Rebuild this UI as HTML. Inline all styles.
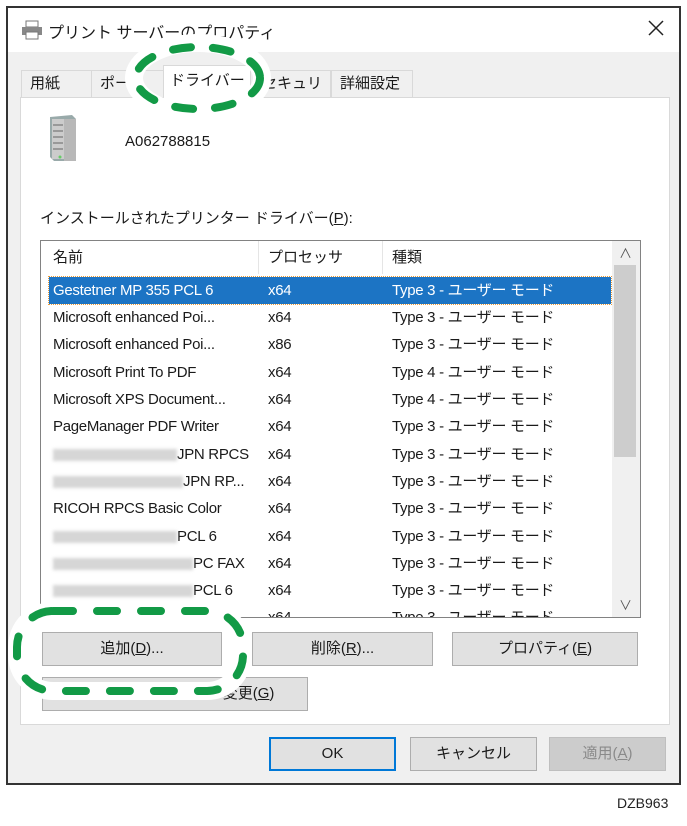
<!DOCTYPE html>
<html><head><meta charset="utf-8"><style>
*{margin:0;padding:0;box-sizing:border-box}
body{width:687px;height:826px;background:#fff;position:relative;overflow:hidden;font-family:"Liberation Sans","Noto Sans CJK JP",sans-serif;color:#1a1a1a}
.a{position:absolute}
.dlg{left:6px;top:6px;width:675px;height:779px;border:2px solid #333;background:#f0f0f0}
.title{left:0;top:0;width:671px;height:44px;background:#fff}
.tab{top:62px;height:28px;border:1px solid #d9d9d9;border-bottom:none;background:#f0f0f0;font-size:15px;line-height:26px;padding-left:8px}
.panel{left:12px;top:89px;width:650px;height:628px;background:#fff;border:1px solid #d9d9d9}
.list{left:40px;top:240px;width:601px;height:378px;border:1px solid #828282;background:#fff;overflow:hidden}
.row{position:absolute;left:8px;width:562px;height:27px;font-size:15px;line-height:27px;letter-spacing:-0.3px}
.row span{position:absolute;white-space:nowrap}
.btn{position:absolute;height:34px;border:1px solid #adadad;background:#e1e1e1;font-size:15px;text-align:center;line-height:32px}
.blur{display:inline-block;height:12px;background:#d6d6d6;filter:blur(1.5px);vertical-align:middle}
</style></head><body>
<div class="a dlg">
 <div class="a title">
  <svg class="a" style="left:13px;top:12px" width="22" height="20" viewBox="0 0 22 20"><rect x="5" y="1" width="12" height="6" fill="#fff" stroke="#777"/><rect x="1" y="7" width="20" height="8" fill="#888"/><rect x="5" y="12" width="12" height="7" fill="#fff" stroke="#777"/></svg>
  <div class="a" style="left:40px;top:11px;font-size:16px">プリント サーバーのプロパティ</div>
  <svg class="a" style="left:640px;top:12px" width="16" height="16"><path d="M1 1L15 15M15 1L1 15" stroke="#222" stroke-width="1.5"/></svg>
 </div>
 <div class="a tab" style="left:13px;width:72px">用紙</div>
 <div class="a tab" style="left:83px;width:76px">ポート</div>
 <div class="a tab" style="left:245px;width:78px">セキュリティ</div>
 <div class="a tab" style="left:323px;width:82px">詳細設定</div>
 <div class="a panel"></div>
 <div class="a tab" style="left:155px;top:57px;width:88px;height:34px;background:#fff;padding-left:6px;line-height:30px">ドライバー</div>
</div>
<svg class="a" style="left:46px;top:113px" width="34" height="50" viewBox="0 0 34 50"><polygon points="4,4 26,2 30,6 30,48 8,48 4,44" fill="#9aa"/><rect x="6" y="6" width="12" height="40" fill="#ccc"/><g stroke="#666"><line x1="7" y1="12" x2="17" y2="12"/><line x1="7" y1="18" x2="17" y2="18"/><line x1="7" y1="24" x2="17" y2="24"/><line x1="7" y1="30" x2="17" y2="30"/><line x1="7" y1="36" x2="17" y2="36"/></g><rect x="18" y="6" width="12" height="42" fill="#b8b8b8"/><circle cx="14" cy="44" r="1.5" fill="#6c6"/></svg>
<div class="a" style="left:125px;top:133px;font-size:15px">A062788815</div>
<div class="a" style="left:40px;top:207px;font-size:15px">インストールされたプリンター ドライバー(<u>P</u>):</div>
<div class="a list">
 <div class="a" style="left:0;top:0;width:571px;height:33px;font-size:15px;line-height:33px">
  <span class="a" style="left:12px">名前</span><span class="a" style="left:227px">プロセッサ</span><span class="a" style="left:351px">種類</span>
  <div class="a" style="left:217px;top:0;width:1px;height:33px;background:#e5e5e5"></div>
  <div class="a" style="left:341px;top:0;width:1px;height:33px;background:#e5e5e5"></div>
 </div>
 <div class="a" style="left:571px;top:0;width:28px;height:376px;background:#f0f0f0"></div>
 <div class="a" style="left:573px;top:24px;width:22px;height:192px;background:#cdcdcd"></div>
 <div class="a" style="left:578px;top:2px;font-size:13px;color:#555">∧</div>
 <div class="a" style="left:578px;top:354px;font-size:13px;color:#555">∨</div>
 <div class="row" style="top:36px;background:#1c74c4;color:#fff;outline:1px dotted #e89b3a"><span style="left:4px">Gestetner MP 355 PCL 6</span><span style="left:219px">x64</span><span style="left:343px">Type 3 - ユーザー モード</span></div>
 <div class="row" style="top:63px"><span style="left:4px">Microsoft enhanced Poi...</span><span style="left:219px">x64</span><span style="left:343px">Type 3 - ユーザー モード</span></div>
 <div class="row" style="top:90px"><span style="left:4px">Microsoft enhanced Poi...</span><span style="left:219px">x86</span><span style="left:343px">Type 3 - ユーザー モード</span></div>
 <div class="row" style="top:118px"><span style="left:4px">Microsoft Print To PDF</span><span style="left:219px">x64</span><span style="left:343px">Type 4 - ユーザー モード</span></div>
 <div class="row" style="top:145px"><span style="left:4px">Microsoft XPS Document...</span><span style="left:219px">x64</span><span style="left:343px">Type 4 - ユーザー モード</span></div>
 <div class="row" style="top:172px"><span style="left:4px">PageManager PDF Writer</span><span style="left:219px">x64</span><span style="left:343px">Type 3 - ユーザー モード</span></div>
 <div class="row" style="top:200px"><span style="left:4px"><i class="blur" style="width:124px"></i>JPN RPCS</span><span style="left:219px">x64</span><span style="left:343px">Type 3 - ユーザー モード</span></div>
 <div class="row" style="top:227px"><span style="left:4px"><i class="blur" style="width:130px"></i>JPN RP...</span><span style="left:219px">x64</span><span style="left:343px">Type 3 - ユーザー モード</span></div>
 <div class="row" style="top:254px"><span style="left:4px">RICOH RPCS Basic Color</span><span style="left:219px">x64</span><span style="left:343px">Type 3 - ユーザー モード</span></div>
 <div class="row" style="top:282px"><span style="left:4px"><i class="blur" style="width:124px"></i>PCL 6</span><span style="left:219px">x64</span><span style="left:343px">Type 3 - ユーザー モード</span></div>
 <div class="row" style="top:309px"><span style="left:4px"><i class="blur" style="width:140px"></i>PC FAX</span><span style="left:219px">x64</span><span style="left:343px">Type 3 - ユーザー モード</span></div>
 <div class="row" style="top:336px"><span style="left:4px"><i class="blur" style="width:140px"></i>PCL 6</span><span style="left:219px">x64</span><span style="left:343px">Type 3 - ユーザー モード</span></div>
 <div class="row" style="top:363px"><span style="left:4px"><i class="blur" style="width:140px"></i>PCL 6</span><span style="left:219px">x64</span><span style="left:343px">Type 3 - ユーザー モード</span></div>
</div>
<div class="btn" style="left:42px;top:632px;width:180px">追加(<u>D</u>)...</div>
<div class="btn" style="left:252px;top:632px;width:181px">削除(<u>R</u>)...</div>
<div class="btn" style="left:452px;top:632px;width:186px">プロパティ(<u>E</u>)</div>
<div class="btn" style="left:42px;top:677px;width:266px;text-align:left;padding-left:60px">ドライバー設定の変更(<u>G</u>)</div>
<div class="btn" style="left:269px;top:737px;width:127px;border:2px solid #0078d7;line-height:30px">OK</div>
<div class="btn" style="left:410px;top:737px;width:127px">キャンセル</div>
<div class="btn" style="left:549px;top:737px;width:117px;background:#ccc;border-color:#bfbfbf;color:#8a8a8a">適用(<u>A</u>)</div>
<svg class="a" style="left:0;top:0" width="687" height="826">
 <ellipse cx="198" cy="78" rx="64" ry="35" fill="none" stroke="#fff" stroke-width="18"/>
 <ellipse cx="198" cy="78" rx="62" ry="31" fill="none" stroke="#129a46" stroke-width="8" stroke-linecap="round" stroke-dasharray="18 22"/>
 <rect x="17" y="611" width="226" height="80" rx="36" fill="none" stroke="#fff" stroke-width="18"/>
 <rect x="17" y="611" width="226" height="80" rx="36" fill="none" stroke="#129a46" stroke-width="8" stroke-linecap="round" stroke-dasharray="20 24"/>
</svg>
<div class="a" style="left:617px;top:795px;font-size:14px;color:#222">DZB963</div>
</body></html>
